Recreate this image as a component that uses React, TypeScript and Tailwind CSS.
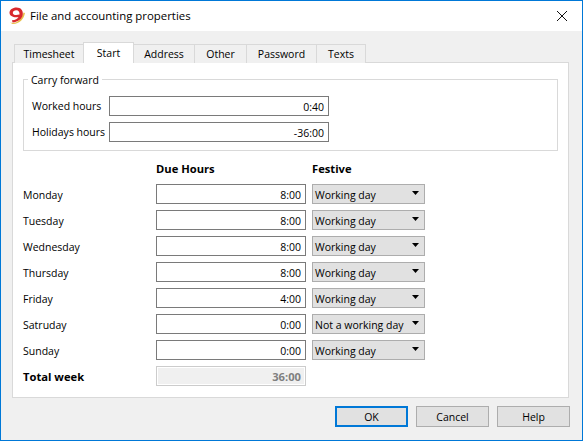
const font = { fontFamily: '"Open Sans", "Noto Sans", sans-serif' };

const tabs = [
  { label: 'Timesheet', w: 'w-[70px]' },
  { label: 'Start', w: 'w-[51px]', active: true },
  { label: 'Address', w: 'w-[62px]' },
  { label: 'Other', w: 'w-[53px]' },
  { label: 'Password', w: 'w-[71px]' },
  { label: 'Texts', w: 'w-[50px]' },
];

const days = [
  ['Monday', '8:00', 'Working day'],
  ['Tuesday', '8:00', 'Working day'],
  ['Wednesday', '8:00', 'Working day'],
  ['Thursday', '8:00', 'Working day'],
  ['Friday', '4:00', 'Working day'],
  ['Satruday', '0:00', 'Not a working day'],
  ['Sunday', '0:00', 'Working day'],
];

function Logo() {
  return (
    <svg width="18" height="18" viewBox="0 0 18 18" className="shrink-0">
      <path d="M2 15.5C8 17.5 13.5 13 15.5 5.5L17 6C16 12 11 17.5 4.5 17Z" fill="#e8c04a" />
      <path
        fillRule="evenodd"
        d="M8.5 0.5C12.8 0.5 15.3 3.3 14.8 7.5C14.3 11.5 10.5 15 4.5 15.5L4 13.3C7.5 13 9.5 12 10.5 10C6.5 11 1.5 9.5 1.5 5.8C1.5 2.8 4.5 0.5 8.5 0.5ZM8.3 3.3C6.3 3.3 4.8 4.3 4.8 5.9C4.8 7.8 7.5 8.5 11.5 7.5C11.8 5 10.5 3.3 8.3 3.3Z"
        fill="#d8282c"
      />
    </svg>
  );
}

function Field({ value, w }: { value: string; w: string }) {
  return (
    <div className={`${w} h-5 border border-[#7a7a7a] bg-white flex items-center justify-end pr-[4px] pt-[2px] text-[10.5px] leading-none text-black`}>
      {value}
    </div>
  );
}

function Combo({ value }: { value: string }) {
  return (
    <div className="w-[113px] h-5 ml-[6px] border border-[#adadad] bg-[#e1e1e1] flex items-center justify-between pl-[2px] pr-[5px] text-[10.5px] leading-none text-black">
      <span className="whitespace-nowrap pt-[2px]">{value}</span>
      <svg width="7" height="4" viewBox="0 0 7 4" className="mb-[3px]">
        <path d="M0 0H7L3.5 4Z" fill="#000" />
      </svg>
    </div>
  );
}

function Button({ label, focused }: { label: string; focused?: boolean }) {
  return (
    <div
      className={`w-[73px] h-[21px] bg-[#e1e1e1] flex items-center justify-center pt-px text-[10.5px] leading-none text-black ${
        focused ? 'border-2 border-[#0078d7]' : 'border border-[#adadad]'
      }`}
    >
      {label}
    </div>
  );
}

export default function App() {
  return (
    <div className="w-[583px] h-[441px] bg-[#f0f0f0] border border-[#0078d7] flex flex-col overflow-hidden text-black" style={font}>
      {/* Title */}
      <div className="h-[30px] shrink-0 bg-white flex items-center pl-[7px] pr-[14px] gap-[4px] text-[11.4px]">
        <Logo />
        <span className="flex-1">File and accounting properties</span>
        <svg width="12" height="12" viewBox="0 0 12 12">
          <path d="M1 1L11 11M11 1L1 11" stroke="#111" strokeWidth="1" fill="none" />
        </svg>
      </div>

      {/* Tabs */}
      <div className="flex items-end h-[32px] shrink-0 pl-[13px] relative z-10 text-[10.5px]">
        {tabs.map(t => (
          <div
            key={t.label}
            className={`${t.w} flex items-center justify-center border border-[#d9d9d9] -mr-px leading-none ${
              t.active ? 'h-[21px] bg-white border-b-0 relative z-10' : 'h-[19px] bg-[#f0f0f0] border-b-0'
            }`}
          >
            {t.label}
          </div>
        ))}
      </div>

      {/* Panel */}
      <div className="ml-[11px] w-[557px] h-[336px] shrink-0 bg-white border border-[#d9d9d9] -mt-px px-[10px] pt-[16px] text-[10.5px]">
        <div className="relative h-[72px] border border-[#d9d9d9] pl-[8px] pt-[16px]">
          <span className="absolute left-[4px] -top-[8px] bg-white px-[3px] leading-[16px]">Carry forward</span>
          <div className="flex items-center h-5 mb-[6px]">
            <span className="w-[77px] whitespace-nowrap pt-[2px]">Worked hours</span>
            <Field value="0:40" w="w-[220px]" />
          </div>
          <div className="flex items-center h-5">
            <span className="w-[77px] whitespace-nowrap pt-[2px]">Holidays hours</span>
            <Field value="-36:00" w="w-[220px]" />
          </div>
        </div>

        <div className="flex items-center h-[16px] mt-[10px] mb-[7px] font-bold text-[11.2px]">
          <span className="ml-[133px] w-[156px]">Due Hours</span>
          <span>Festive</span>
        </div>

        {days.map(([day, hours, kind]) => (
          <div key={day} className="flex items-center h-5 mb-[6px]">
            <span className="w-[133px] whitespace-nowrap pt-[4px]">{day}</span>
            <Field value={hours} w="w-[150px]" />
            <Combo value={kind} />
          </div>
        ))}

        <div className="flex items-center h-5 font-bold text-[11.2px]">
          <span className="w-[133px] pt-[2px]">Total week</span>
          <div className="w-[150px] h-5 border border-[#cccccc] bg-white p-px">
            <div className="h-full bg-[#f0f0f0] flex items-center justify-end pr-[3px] pt-px text-[#7f7f7f] leading-none">36:00</div>
          </div>
        </div>
      </div>

      {/* Buttons */}
      <div className="flex justify-end gap-[8px] pr-[12px] pt-[8px]">
        <Button label="OK" focused />
        <Button label="Cancel" />
        <Button label="Help" />
      </div>
    </div>
  );
}
